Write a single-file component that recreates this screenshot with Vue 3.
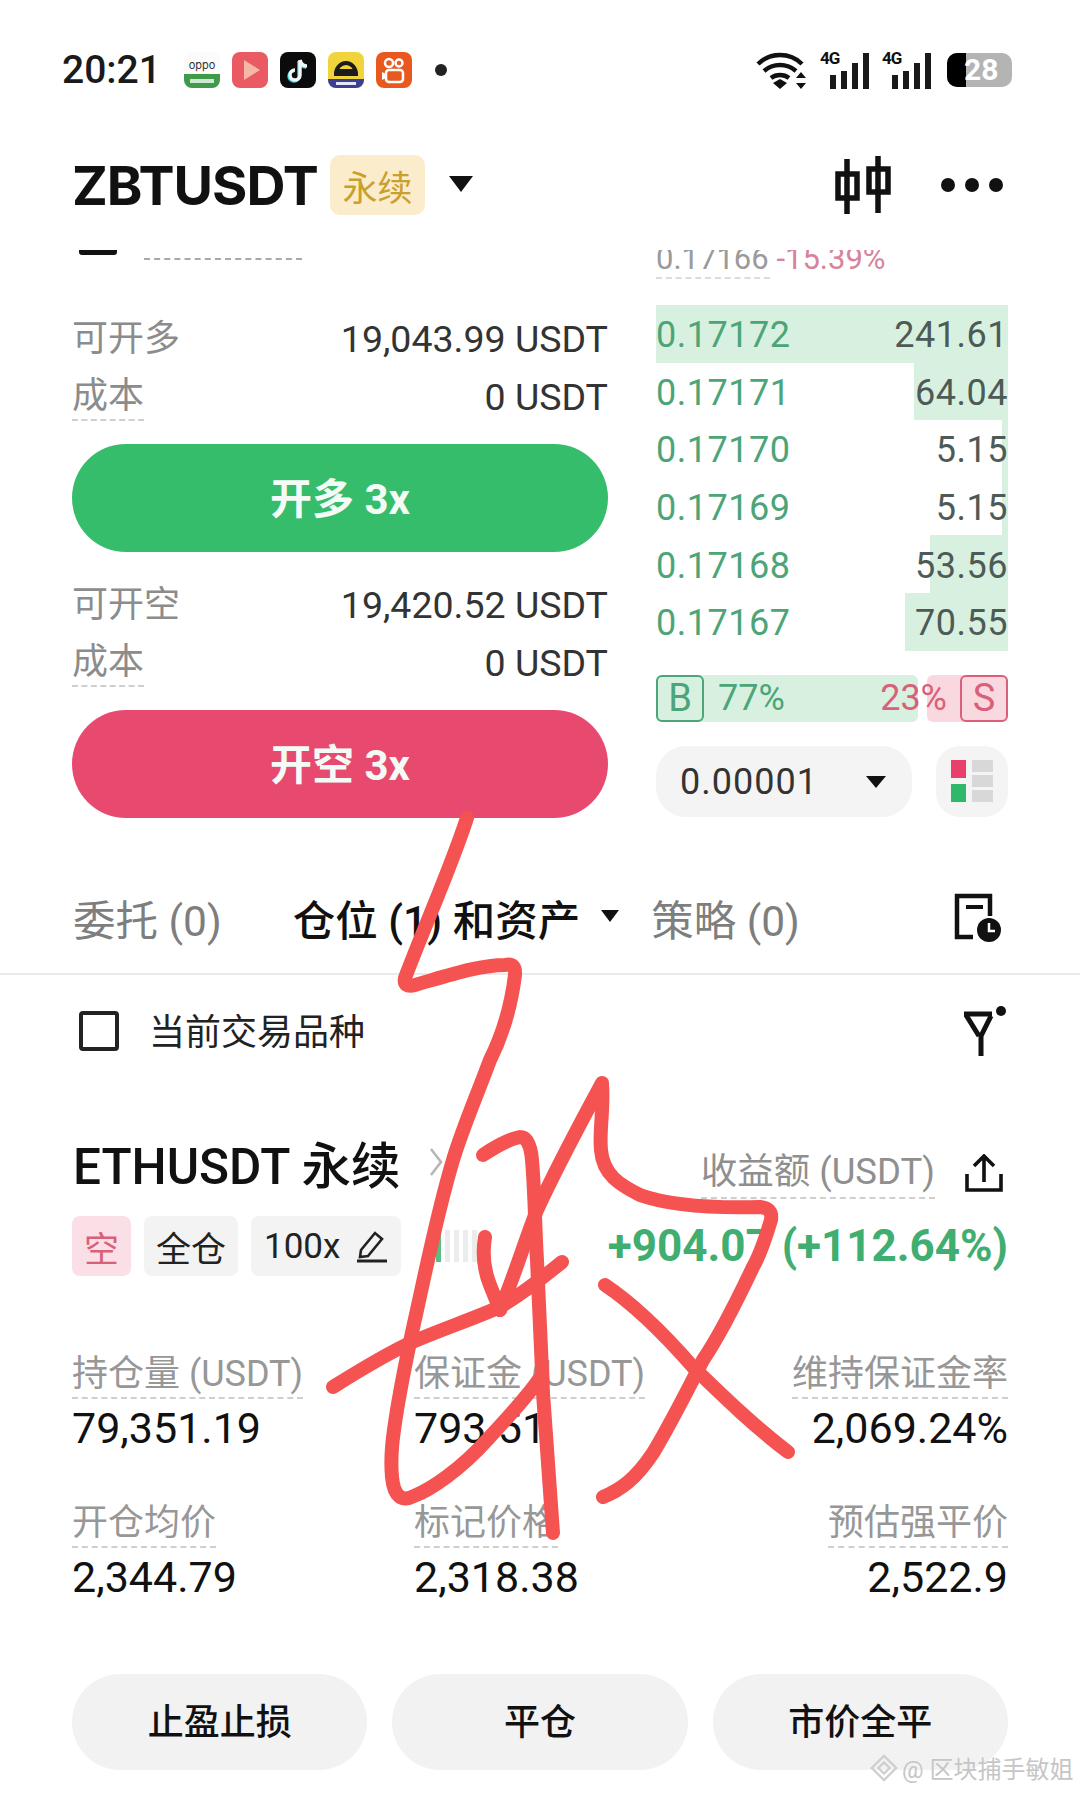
<template>
  <div class="phone">
    <!-- 状态栏 -->
    <div class="status">
      <span class="time">20:21</span>
      <div class="apps">
        <svg class="app" viewBox="0 0 36 36">
          <rect width="36" height="36" rx="8" fill="#fbfbfb" />
          <path d="M0 22h36v6a8 8 0 0 1-8 8H8a8 8 0 0 1-8-8z" fill="#3f9a4a" />
          <text x="18" y="17" text-anchor="middle" class="oppo">oppo</text>
          <rect x="6" y="27" width="24" height="4" fill="#cfe8d2" />
        </svg>
        <svg class="app" viewBox="0 0 36 36">
          <rect width="36" height="36" rx="8" fill="#ea5a62" />
          <path d="M12 8l16 10-16 10z" fill="#f6b7a6" />
        </svg>
        <svg class="app" viewBox="0 0 36 36">
          <rect width="36" height="36" rx="8" fill="#0b0b0d" />
          <path d="M20 8v15a5 5 0 1 1-5-5M20 8c1 4 4 6 7 6" fill="none" stroke="#27d4dc" stroke-width="3.5" transform="translate(-1 1)" />
          <path d="M20 8v15a5 5 0 1 1-5-5M20 8c1 4 4 6 7 6" fill="none" stroke="#f4f4f4" stroke-width="3.5" />
        </svg>
        <svg class="app" viewBox="0 0 36 36">
          <rect width="36" height="36" rx="8" fill="#f1d33c" />
          <path d="M8 22a10 11 0 0 1 20 0z" fill="none" stroke="#1c1c1c" stroke-width="4" />
          <rect x="7" y="17" width="22" height="6" rx="2" fill="#1c1c1c" />
          <path d="M0 27h36v1a8 8 0 0 1-8 8H8a8 8 0 0 1-8-8z" fill="#3b3f93" />
          <rect x="8" y="30" width="20" height="3" fill="#e6e6f2" />
        </svg>
        <svg class="app" viewBox="0 0 36 36">
          <rect width="36" height="36" rx="8" fill="#e9591f" />
          <circle cx="13" cy="11" r="4" fill="none" stroke="#fff" stroke-width="2.5" />
          <circle cx="23" cy="11" r="3.5" fill="none" stroke="#fff" stroke-width="2.5" />
          <rect x="10" y="18" width="17" height="12" rx="3" fill="none" stroke="#fff" stroke-width="2.5" />
          <path d="M10 22l-4-2v8l4-2z" fill="#fff" />
        </svg>
        <span class="dot"></span>
      </div>
      <div class="signals">
        <svg class="wifi" viewBox="0 0 52 38">
          <g fill="none" stroke="#111" stroke-width="4.4">
            <path d="M3 13C15 1 35 1 47 13" />
            <path d="M9 20c9-8 23-8 32 0" />
            <path d="M16 27c5-4 13-4 18 0" />
          </g>
          <path d="M25 38l-7-6 7-4 7 4z" fill="#111" />
          <path d="M46 21l5 6H41zM46 38l5-6H41z" fill="#111" />
        </svg>
        <div v-for="n in 2" :key="n" class="cell">
          <span class="net">4G</span>
          <i class="b1"></i><i class="b2"></i><i class="b3"></i><i class="b4"></i>
        </div>
        <div class="battery"><span class="level"></span><span class="pct">28</span></div>
      </div>
    </div>

    <!-- 标题 -->
    <div class="topbar">
      <span class="symbol">ZBTUSDT</span>
      <span class="perp">永续</span>
      <span class="caret big"></span>
      <svg class="candle" viewBox="0 0 58 58">
        <g fill="none" stroke="#111" stroke-width="5.5">
          <path d="M13 3v55M44 0v57" />
          <rect x="4" y="18" width="19" height="24" />
          <rect x="35" y="13" width="19" height="23" />
        </g>
      </svg>
      <div class="more"><i></i><i></i><i></i></div>
    </div>

    <!-- 交易区 -->
    <div class="trade">
      <div class="left">
        <div class="cut">
          <i class="minus"></i>
          <i class="dashes"></i>
        </div>
        <template v-for="side in sides" :key="side.action">
          <div class="kv first">
            <span class="k">{{ side.label }}</span>
            <span class="v">{{ side.amount }} USDT</span>
          </div>
          <div class="kv">
            <span class="k under">成本</span>
            <span class="v">0 USDT</span>
          </div>
          <div class="open" :class="side.cls">{{ side.action }} 3x</div>
        </template>
      </div>

      <div class="right">
        <div class="cut-price"><span>0.17166 <em>-15.39%</em></span></div>
        <i class="cut-dash"></i>
        <div class="book">
          <div v-for="row in book" :key="row.price" class="book-row">
            <i class="depth" :style="{ width: row.depth + 'px' }"></i>
            <span class="price">{{ row.price }}</span>
            <span class="qty">{{ row.qty }}</span>
          </div>
        </div>
        <div class="ratio">
          <div class="r-buy"><b>B</b><span>77%</span></div>
          <div class="r-sell"><span>23%</span><b>S</b></div>
        </div>
        <div class="tools">
          <div class="step">0.00001<span class="caret small"></span></div>
          <div class="layout">
            <div class="col-a"><i class="red"></i><i class="green"></i></div>
            <div class="col-b"><i></i><i></i><i></i></div>
          </div>
        </div>
      </div>
    </div>

    <!-- 标签 -->
    <div class="tabs">
      <span class="tab">委托 (0)</span>
      <span class="tab on">仓位 (1) 和资产<span class="caret tiny"></span></span>
      <span class="tab">策略 (0)</span>
      <svg class="history" viewBox="0 0 50 50">
        <path d="M20 44H4V3h33v20" fill="none" stroke="#111" stroke-width="4.5" />
        <path d="M13 14h17" stroke="#111" stroke-width="4" />
        <circle cx="36" cy="37" r="12" fill="#111" />
        <path d="M36 30v8h6" fill="none" stroke="#fff" stroke-width="2.5" />
      </svg>
    </div>

    <div class="filter">
      <i class="check"></i>
      <span>当前交易品种</span>
      <svg class="funnel" viewBox="0 0 46 50">
        <path d="M4 8h28" fill="none" stroke="#111" stroke-width="5" />
        <path d="M6 9l13 21" fill="none" stroke="#111" stroke-width="5" />
        <path d="M31 10L21 30v20" fill="none" stroke="#111" stroke-width="5" />
        <circle cx="41" cy="5" r="5" fill="#111" />
      </svg>
    </div>

    <!-- 持仓 -->
    <div class="position">
      <div class="pos-head">
        <span class="pair">ETHUSDT 永续</span>
        <svg class="chevron" viewBox="0 0 14 30">
          <path d="M2 2l10 13L2 28" fill="none" stroke="#b5b5b5" stroke-width="2.5" />
        </svg>
        <span class="pnl-label under">收益额 (USDT)</span>
        <svg class="share" viewBox="0 0 38 38">
          <path d="M2 20v16h34V20M19 28V3M9 12l10-10 10 10" fill="none" stroke="#111" stroke-width="3.6" />
        </svg>
      </div>
      <div class="pos-tags">
        <span class="tag short">空</span>
        <span class="tag">全仓</span>
        <span class="tag lever">100x
          <svg class="pen" viewBox="0 0 32 34">
            <path d="M5 21L19 4l7 6-14 17-8 1z" fill="none" stroke="#222" stroke-width="2.6" />
            <path d="M1 32h30" stroke="#222" stroke-width="3" />
          </svg>
        </span>
        <div class="pulse"><i class="g"></i><i></i><i></i><i></i><i></i></div>
        <span class="pnl">+904.07 (+112.64%)</span>
      </div>

      <div class="stats">
        <div v-for="s in stats" :key="s.label" class="stat">
          <span class="s-label under">{{ s.label }}</span>
          <span class="s-value">{{ s.value }}</span>
        </div>
      </div>
    </div>

    <div class="actions">
      <div v-for="a in actions" :key="a" class="action">{{ a }}</div>
    </div>

    <!-- 水印 -->
    <div class="mark">
      <svg viewBox="0 0 30 30">
        <path d="M15 2l13 13-13 13L2 15z M15 9l6 6-6 6-6-6z" fill="none" stroke="#cfcfcf" stroke-width="2.5" />
      </svg>
      <span>@ 区块捕手敏姐</span>
    </div>

    <!-- 手写红字，盖在页面上面 -->
    <svg class="scribble" viewBox="0 0 1080 1794">
      <g fill="none" stroke="#f55352" stroke-width="14" stroke-linecap="round" stroke-linejoin="round">
        <path d="M467 818C450 870 425 925 405 978Q403 988 415 985C450 975 480 965 505 965Q516 962 515 975C510 1015 500 1040 490 1060C475 1100 462 1130 453 1160C438 1210 428 1260 417 1310C408 1350 402 1380 397 1410C393 1435 390 1455 392 1477C394 1497 402 1502 414 1496C430 1490 460 1470 487 1440C505 1420 525 1400 540 1378" />
        <path d="M333 1387C360 1370 385 1355 410 1343C440 1330 470 1320 500 1307C520 1295 540 1280 562 1262" />
        <path d="M500 1310C515 1275 525 1240 537 1210C560 1160 585 1115 602 1083C604 1110 599 1130 601 1150C603 1175 620 1185 640 1195C670 1206 720 1208 760 1207Q773 1208 771 1220C765 1240 760 1255 753 1267C735 1305 720 1335 703 1360C685 1395 670 1425 653 1453C635 1480 620 1490 603 1497" />
        <path d="M483 1155C495 1147 510 1139 520 1137Q530 1137 532 1160C535 1195 535 1230 537 1260L543 1393L553 1533" />
        <path d="M485 1237C482 1255 484 1270 490 1285Q496 1300 500 1310" />
        <path d="M605 1285C635 1305 665 1335 693 1367C725 1398 755 1427 788 1452" />
      </g>
    </svg>
  </div>
</template>

<script setup>
const sides = [
  { label: '可开多', amount: '19,043.99', action: '开多', cls: 'long' },
  { label: '可开空', amount: '19,420.52', action: '开空', cls: 'sell' }
]

const book = [
  { price: '0.17172', qty: '241.61', depth: 352 },
  { price: '0.17171', qty: '64.04', depth: 94 },
  { price: '0.17170', qty: '5.15', depth: 6 },
  { price: '0.17169', qty: '5.15', depth: 6 },
  { price: '0.17168', qty: '53.56', depth: 78 },
  { price: '0.17167', qty: '70.55', depth: 103 }
]

const stats = [
  { label: '持仓量 (USDT)', value: '79,351.19' },
  { label: '保证金 (USDT)', value: '793.51' },
  { label: '维持保证金率', value: '2,069.24%' },
  { label: '开仓均价', value: '2,344.79' },
  { label: '标记价格', value: '2,318.38' },
  { label: '预估强平价', value: '2,522.9' }
]

const actions = ['止盈止损', '平仓', '市价全平']
</script>

<style>
html, body {
  margin: 0;
  background: #fff;
}
</style>

<style scoped>
.phone {
  position: relative;
  width: 1080px;
  height: 1794px;
  overflow: hidden;
  background: #fff;
  color: #111;
  font-family: "Roboto", "Noto Sans CJK SC", sans-serif;
}

.status {
  display: flex;
  align-items: center;
  height: 140px;
  padding: 0 68px 0 62px;
  box-sizing: border-box;
}
.time {
  width: 122px;
  font-size: 39px;
  font-weight: 500;
  color: #1a1a1a;
}
.apps {
  display: flex;
  align-items: center;
  gap: 12px;
}
.app {
  width: 36px;
  height: 36px;
}
.oppo {
  font-size: 11px;
  fill: #333;
  font-family: "Inter", sans-serif;
}
.dot {
  width: 12px;
  height: 12px;
  margin-left: 11px;
  border-radius: 50%;
  background: #222;
}
.signals {
  display: flex;
  align-items: center;
  margin-left: auto;
  gap: 12px;
}
.wifi {
  width: 52px;
  height: 38px;
  margin-right: 1px;
}
.cell {
  position: relative;
  display: flex;
  align-items: flex-end;
  gap: 5px;
  width: 50px;
  height: 38px;
  box-sizing: border-box;
  padding-left: 10px;
}
.net {
  position: absolute;
  left: 0;
  top: -3px;
  font-size: 17px;
  font-weight: 700;
  letter-spacing: -1px;
}
.cell i {
  width: 6px;
  background: #1a1a1a;
}
.b1, .b2 { height: 14px; }
.b2 { height: 18px; }
.b3 { height: 26px; }
.b4 { height: 36px; }
.battery {
  position: relative;
  width: 65px;
  height: 34px;
  border-radius: 10px;
  background: #b4b4b4;
  margin-left: 3px;
}
.level {
  position: absolute;
  left: 0;
  top: 0;
  bottom: 0;
  width: 19px;
  border-radius: 10px 0 0 10px;
  background: #000;
}
.pct {
  position: absolute;
  left: 17px;
  top: 0;
  color: #fff;
  font-size: 30px;
  font-weight: 700;
  line-height: 34px;
}

.topbar {
  display: flex;
  align-items: center;
  height: 90px;
  margin-bottom: 20px;
  padding: 0 77px 0 72px;
}
.symbol {
  font-family: "Inter", "Noto Sans CJK SC", sans-serif;
  font-size: 54px;
  font-weight: 700;
  letter-spacing: -1px;
  width: 258px;
}
.perp {
  display: flex;
  align-items: center;
  justify-content: center;
  width: 95px;
  height: 60px;
  border-radius: 10px;
  background: #fbeccb;
  color: #c9a02c;
  font-size: 35px;
}
.caret {
  width: 0;
  height: 0;
  border-style: solid;
  border-color: #111 transparent transparent;
}
.caret.big {
  margin-left: 24px;
  margin-bottom: 2px;
  border-width: 16px 12px 0;
}
.candle {
  width: 58px;
  height: 58px;
  margin-left: auto;
}
.more {
  display: flex;
  gap: 10px;
  margin-left: 49px;
}
.more i {
  width: 14px;
  height: 14px;
  border-radius: 50%;
  background: #111;
}

.trade {
  display: flex;
  justify-content: space-between;
  padding: 0 72px;
  height: 568px;
}
.left {
  width: 536px;
}
.cut {
  position: relative;
  height: 36px;
}
.minus {
  position: absolute;
  left: 7px;
  top: 0;
  width: 38px;
  height: 5px;
  border-radius: 0 0 3px 3px;
  background: #111;
}
.dashes {
  position: absolute;
  left: 72px;
  top: 8px;
  width: 158px;
  border-top: 2px dashed #a8a8a8;
}
.kv {
  display: flex;
  justify-content: space-between;
  align-items: center;
  height: 50px;
  margin-top: 8px;
  font-size: 37.5px;
}
.kv.first {
  margin-top: 28px;
}
.k {
  font-size: 36px;
  color: #8c8c8c;
  line-height: 46px;
}
.v {
  color: #333;
}
.under {
  border-bottom: 2px dashed #cfcfcf;
}
.open {
  display: flex;
  align-items: center;
  justify-content: center;
  height: 108px;
  box-sizing: border-box;
  padding-bottom: 6px;
  margin-top: 22px;
  border-radius: 54px;
  color: #f4fbf6;
  font-size: 42px;
  font-weight: 700;
}
.open.long {
  background: #36bd6b;
}
.open.sell {
  background: #e84a6f;
}

.right {
  width: 352px;
}
.cut-price {
  height: 24px;
  overflow: hidden;
  display: flex;
  align-items: flex-end;
  font-size: 31px;
  color: #9a9a9a;
}
.cut-price span {
  line-height: 30px;
}
.cut-price em {
  font-style: normal;
  color: #d9829b;
}
.cut-dash {
  display: block;
  width: 114px;
  margin-top: 3px;
  border-top: 2px dashed #dcdcdc;
}
.book {
  margin-top: 26px;
}
.book-row {
  position: relative;
  display: flex;
  justify-content: space-between;
  align-items: center;
  height: 57.6px;
  box-sizing: border-box;
  padding-top: 3px;
  font-size: 36px;
  letter-spacing: 0.5px;
}
.depth {
  position: absolute;
  right: 0;
  top: 0;
  bottom: 0;
  background: #d8f0e0;
}
.price {
  position: relative;
  color: #4ba578;
}
.qty {
  position: relative;
  color: #4d5a55;
}
.ratio {
  display: flex;
  justify-content: space-between;
  height: 47px;
  margin-top: 24px;
  font-size: 36px;
}
.r-buy, .r-sell {
  display: flex;
  align-items: center;
  border-radius: 6px;
}
.r-buy {
  width: 262px;
  background: #d8f0e0;
  color: #4ba578;
}
.r-sell {
  width: 81px;
  background: #fad8e0;
  color: #d9607a;
  justify-content: flex-end;
}
.r-sell span {
  margin-left: -47px;
  margin-right: 13px;
}
.r-buy span {
  margin-left: 14px;
}
.r-buy b, .r-sell b {
  display: flex;
  align-items: center;
  justify-content: center;
  width: 48px;
  height: 47px;
  box-sizing: border-box;
  border: 2px solid;
  border-radius: 6px;
  font-weight: 400;
  font-size: 38px;
}
.tools {
  display: flex;
  justify-content: space-between;
  margin-top: 24px;
}
.step {
  display: flex;
  align-items: center;
  justify-content: space-between;
  width: 256px;
  height: 71px;
  box-sizing: border-box;
  padding: 2px 26px 0 24px;
  border-radius: 30px;
  background: #f4f4f4;
  font-size: 36px;
  color: #333;
  letter-spacing: 1px;
}
.caret.small {
  border-width: 12px 10px 0;
}
.layout {
  display: flex;
  align-items: center;
  justify-content: center;
  gap: 6px;
  width: 72px;
  height: 71px;
  border-radius: 24px;
  background: #f4f4f4;
}
.col-a, .col-b {
  display: flex;
  flex-direction: column;
}
.col-a { gap: 6px; }
.col-a i {
  width: 15px;
  height: 18px;
}
.red { background: #e8406a; }
.green { background: #2fb86a; }
.col-b { gap: 3px; }
.col-b i {
  width: 21px;
  height: 12px;
  background: #d8d8d8;
}

.tabs {
  position: relative;
  display: flex;
  align-items: center;
  height: 157px;
  box-sizing: border-box;
  padding: 44px 77px 0 73px;
  border-bottom: 2px solid #eaeaea;
  font-size: 42.5px;
}
.tab {
  display: flex;
  align-items: center;
  color: #7e7e7e;
  white-space: nowrap;
}
.tab.on {
  color: #111;
  font-weight: 500;
  margin-left: 71px;
}
.tab + .tab + .tab {
  margin-left: 32px;
}
.caret.tiny {
  margin-left: 21px;
  margin-bottom: 4px;
  border-width: 12px 9px 0;
}
.history {
  width: 50px;
  height: 50px;
  margin-left: auto;
}

.filter {
  display: flex;
  align-items: center;
  height: 112px;
  padding: 0 74px 0 79px;
  font-size: 36px;
  color: #222;
}
.filter span {
  margin-bottom: 4px;
}
.check {
  width: 40px;
  height: 40px;
  box-sizing: border-box;
  border: 4px solid #222;
  border-radius: 4px;
  margin-right: 30px;
}
.funnel {
  width: 46px;
  height: 50px;
  margin-left: auto;
}

.position {
  padding: 0 72px;
}
.pos-head {
  display: flex;
  align-items: center;
  margin-top: 41px;
  height: 68px;
}
.pair {
  font-size: 49.5px;
  font-weight: 500;
  margin-left: 1px;
}
.chevron {
  width: 14px;
  height: 30px;
  margin-left: 28px;
}
.pnl-label {
  margin-left: auto;
  margin-top: 22px;
  font-size: 36.5px;
  color: #8f8f8f;
  line-height: 50px;
}
.share {
  width: 38px;
  height: 38px;
  margin-top: 22px;
  margin-left: 30px;
  margin-right: 5px;
}
.pos-tags {
  display: flex;
  align-items: center;
  gap: 13px;
  height: 60px;
  margin-top: 20px;
}
.tag {
  display: flex;
  align-items: center;
  justify-content: center;
  gap: 12px;
  height: 60px;
  padding: 0 12px;
  border-radius: 8px;
  background: #f3f3f3;
  font-size: 35px;
  color: #222;
}
.tag.short {
  padding: 0 12px;
  background: #fbdfe6;
  color: #d9607a;
}
.tag.lever {
  gap: 16px;
  padding: 0 13px;
}
.pen {
  width: 32px;
  height: 34px;
}
.pulse {
  display: flex;
  gap: 4px;
  margin-left: 22px;
}
.pulse i {
  width: 5px;
  height: 32px;
  background: #ececec;
}
.pulse i.g {
  background: #5cbc83;
}
.pnl {
  margin-left: auto;
  color: #3fae70;
  font-size: 44px;
  font-weight: 700;
  white-space: nowrap;
}
.stats {
  display: grid;
  grid-template-columns: 342px 1fr auto;
  row-gap: 43px;
  margin-top: 75px;
}
.stat {
  display: flex;
  flex-direction: column;
  align-items: flex-start;
}
.stat:nth-child(3n) {
  align-items: flex-end;
}
.s-label {
  font-size: 36px;
  line-height: 46px;
  color: #979797;
}
.s-value {
  font-size: 43px;
  line-height: 58px;
  color: #111;
}

.actions {
  display: flex;
  gap: 25px;
  padding: 0 72px;
  margin-top: 68px;
}
.action {
  display: flex;
  align-items: center;
  justify-content: center;
  flex: 1;
  height: 96px;
  box-sizing: border-box;
  padding-bottom: 6px;
  border-radius: 48px;
  background: #f2f2f2;
  font-size: 36px;
  font-weight: 500;
}

.mark {
  position: absolute;
  left: 870px;
  top: 1750px;
  display: flex;
  align-items: center;
  gap: 4px;
  font-size: 24px;
  color: #c6c6c6;
  white-space: nowrap;
}
.mark svg {
  width: 28px;
  height: 28px;
}
.scribble {
  position: absolute;
  left: 0;
  top: 0;
  width: 1080px;
  height: 1794px;
  pointer-events: none;
}
</style>
